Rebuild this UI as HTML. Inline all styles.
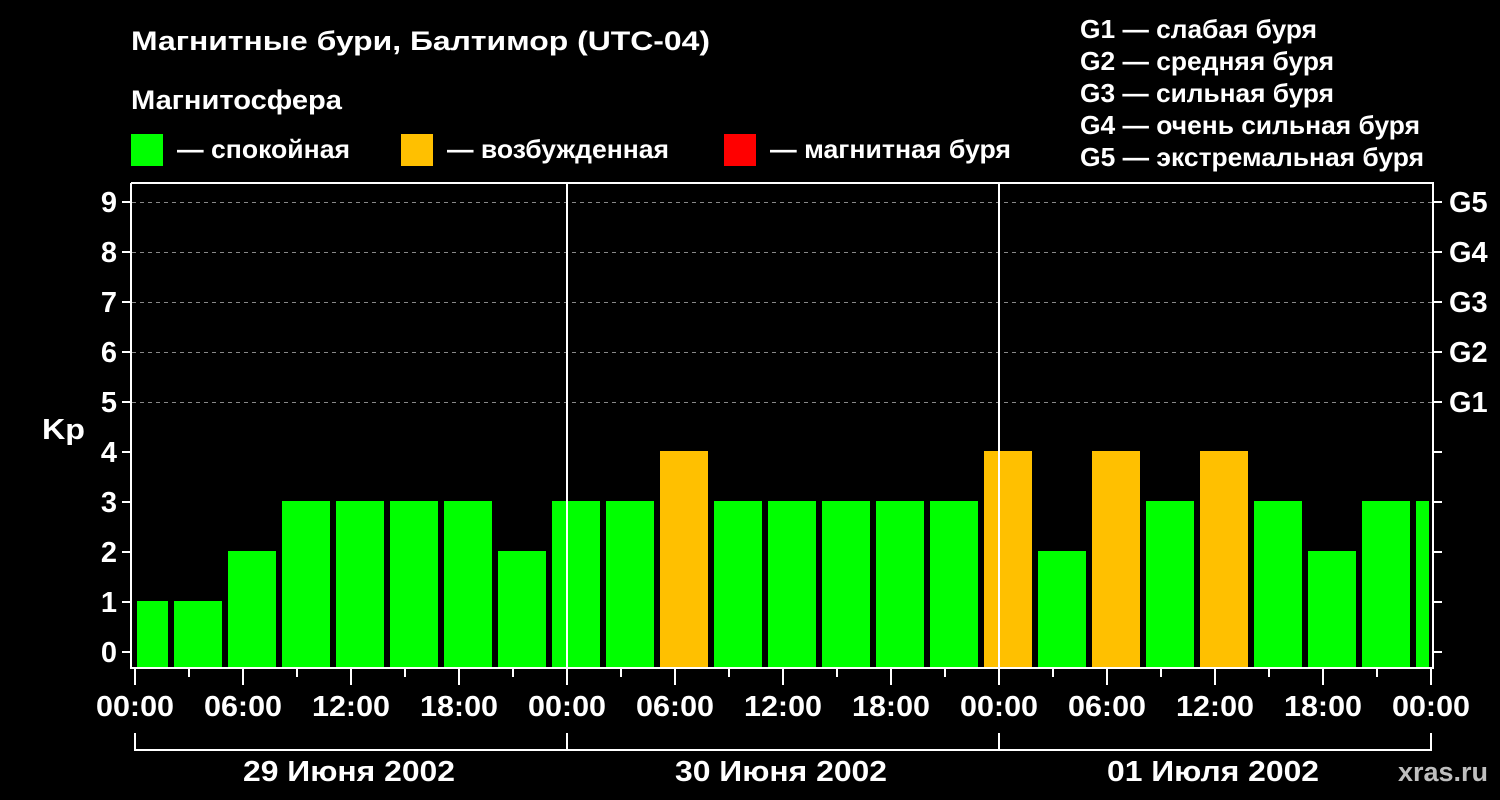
<!DOCTYPE html><html><head><meta charset="utf-8"><style>html,body{margin:0;padding:0;background:#000}svg{display:block}text{font-family:"Liberation Sans",Arial,sans-serif;font-weight:bold;fill:#fff}</style></head><body>
<svg width="1500" height="800" viewBox="0 0 1500 800">
<rect width="1500" height="800" fill="#000"/>
<text x="131" y="50" font-size="27" textLength="579" lengthAdjust="spacingAndGlyphs">Магнитные бури, Балтимор (UTC-04)</text>
<text x="131" y="109" font-size="27" textLength="211" lengthAdjust="spacingAndGlyphs">Магнитосфера</text>
<rect x="131" y="134" width="32" height="32" fill="#00ff00"/><text x="177" y="158" font-size="26" textLength="173" lengthAdjust="spacingAndGlyphs">— спокойная</text>
<rect x="401" y="134" width="32" height="32" fill="#ffc000"/><text x="447" y="158" font-size="26" textLength="222" lengthAdjust="spacingAndGlyphs">— возбужденная</text>
<rect x="724" y="134" width="32" height="32" fill="#ff0000"/><text x="770" y="158" font-size="26" textLength="241" lengthAdjust="spacingAndGlyphs">— магнитная буря</text>
<g font-size="26" lengthAdjust="spacingAndGlyphs"><text x="1080" y="38" textLength="237" lengthAdjust="spacingAndGlyphs">G1 — слабая буря</text><text x="1080" y="70" textLength="254" lengthAdjust="spacingAndGlyphs">G2 — средняя буря</text><text x="1080" y="102" textLength="254" lengthAdjust="spacingAndGlyphs">G3 — сильная буря</text><text x="1080" y="134" textLength="340" lengthAdjust="spacingAndGlyphs">G4 — очень сильная буря</text><text x="1080" y="166" textLength="344" lengthAdjust="spacingAndGlyphs">G5 — экстремальная буря</text></g>
<g stroke="#888" stroke-dasharray="4,4" stroke-width="1"><line x1="132" x2="1433" y1="202.5" y2="202.5"/><line x1="132" x2="1433" y1="252.5" y2="252.5"/><line x1="132" x2="1433" y1="302.5" y2="302.5"/><line x1="132" x2="1433" y1="352.5" y2="352.5"/><line x1="132" x2="1433" y1="402.5" y2="402.5"/></g>
<g>
<rect x="137" y="601" width="31" height="67" fill="#00ff00"/>
<rect x="174" y="601" width="48" height="67" fill="#00ff00"/>
<rect x="228" y="551" width="48" height="117" fill="#00ff00"/>
<rect x="282" y="501" width="48" height="167" fill="#00ff00"/>
<rect x="336" y="501" width="48" height="167" fill="#00ff00"/>
<rect x="390" y="501" width="48" height="167" fill="#00ff00"/>
<rect x="444" y="501" width="48" height="167" fill="#00ff00"/>
<rect x="498" y="551" width="48" height="117" fill="#00ff00"/>
<rect x="552" y="501" width="48" height="167" fill="#00ff00"/>
<rect x="606" y="501" width="48" height="167" fill="#00ff00"/>
<rect x="660" y="451" width="48" height="217" fill="#ffc000"/>
<rect x="714" y="501" width="48" height="167" fill="#00ff00"/>
<rect x="768" y="501" width="48" height="167" fill="#00ff00"/>
<rect x="822" y="501" width="48" height="167" fill="#00ff00"/>
<rect x="876" y="501" width="48" height="167" fill="#00ff00"/>
<rect x="930" y="501" width="48" height="167" fill="#00ff00"/>
<rect x="984" y="451" width="48" height="217" fill="#ffc000"/>
<rect x="1038" y="551" width="48" height="117" fill="#00ff00"/>
<rect x="1092" y="451" width="48" height="217" fill="#ffc000"/>
<rect x="1146" y="501" width="48" height="167" fill="#00ff00"/>
<rect x="1200" y="451" width="48" height="217" fill="#ffc000"/>
<rect x="1254" y="501" width="48" height="167" fill="#00ff00"/>
<rect x="1308" y="551" width="48" height="117" fill="#00ff00"/>
<rect x="1362" y="501" width="48" height="167" fill="#00ff00"/>
<rect x="1416" y="501" width="13" height="167" fill="#00ff00"/>
</g>
<g stroke="#fff" stroke-width="2" fill="none">
<polyline points="131,183 1433,183 1433,668 131,668 131,183"/>
<line x1="567" y1="183" x2="567" y2="668"/><line x1="999" y1="183" x2="999" y2="668"/>
<polyline points="135,733 135,750 1431,750 1431,733"/><line x1="567" y1="733" x2="567" y2="750"/><line x1="999" y1="733" x2="999" y2="750"/>
</g>
<g id="ticks" stroke="#fff" stroke-width="2"></g>
<g font-size="29" text-anchor="end" id="yl"></g>
<g font-size="29" id="gl"></g>
<text x="42" y="439" font-size="29" textLength="43" lengthAdjust="spacingAndGlyphs">Kp</text>
<g font-size="29" text-anchor="middle" id="xl"></g>
<g font-size="29" text-anchor="middle"><text x="349" y="781" textLength="212" lengthAdjust="spacingAndGlyphs">29 Июня 2002</text><text x="781" y="781" textLength="212" lengthAdjust="spacingAndGlyphs">30 Июня 2002</text><text x="1213" y="781" textLength="212" lengthAdjust="spacingAndGlyphs">01 Июля 2002</text></g>
<text x="1443" y="781" font-size="27" text-anchor="middle" style="fill:#bfbfbf">xras.ru</text>
</svg>
<script>
var ns="http://www.w3.org/2000/svg";function el(p,t,a,tx){var e=document.createElementNS(ns,t);for(var k in a)e.setAttribute(k,a[k]);if(tx)e.textContent=tx;document.getElementById(p).appendChild(e);}
for(var k=0;k<=9;k++){var y=652-50*k;el("ticks","line",{x1:122,x2:131,y1:y,y2:y});el("ticks","line",{x1:1433,x2:1442,y1:y,y2:y});el("yl","text",{x:117,y:y+10},String(k));if(k>=5)el("gl","text",{x:1449,y:y+10},"G"+(k-4));}
var lab=["00:00","06:00","12:00","18:00"];
for(var h=0;h<=72;h+=3){var x=135+18*h;var maj=h%6==0;el("ticks","line",{x1:x,x2:x,y1:669,y2:maj?685:677});if(maj)el("xl","text",{x:x,y:716,textLength:78,lengthAdjust:"spacingAndGlyphs"},h==72?"00:00":lab[(h%24)/6]);}
</script>
</body></html>
